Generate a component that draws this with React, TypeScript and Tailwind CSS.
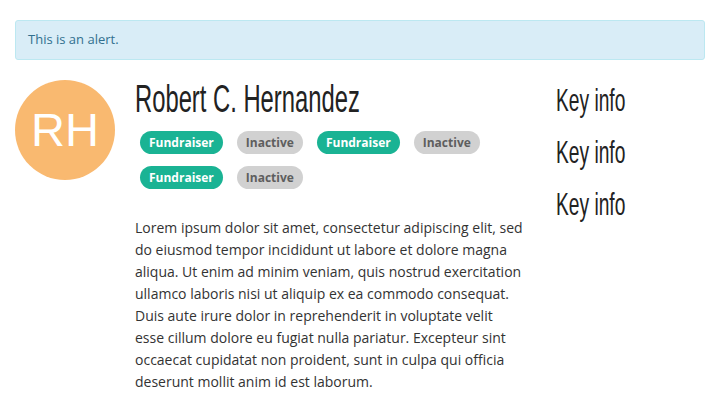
const tags = [
  { label: "Fundraiser", active: true },
  { label: "Inactive", active: false },
  { label: "Fundraiser", active: true },
  { label: "Inactive", active: false },
  { label: "Fundraiser", active: true },
  { label: "Inactive", active: false },
];

export default function App() {
  return (
    <div className="w-[720px] h-[415px] bg-white px-[15px] pt-[20px] font-['Open_Sans',sans-serif] text-[#333]">
      {/* Alert */}
      <div className="h-[40px] flex items-center px-[12px] rounded-[3px] border border-[#bce8f1] bg-[#d9edf7] text-[#31708f] text-[13px]">
        This is an alert.
      </div>

      <div className="flex mt-[20px]">
        {/* Avatar */}
        <div className="w-[100px] h-[100px] shrink-0 rounded-full bg-[#f9b970] flex items-center justify-center">
          <span className="text-white text-[47px] leading-none font-['Liberation_Sans',Arial,sans-serif] -mt-[2px]">RH</span>
        </div>

        {/* Main */}
        <div className="ml-[20px] w-[400px]">
          <h1 className="h-[37px] text-[39px] leading-[37px] text-[#222] font-['Liberation_Sans',Arial,sans-serif] whitespace-nowrap">
            <span className="inline-block origin-left scale-x-[0.61]">Robert C. Hernandez</span>
          </h1>
          <div className="mt-[14px] ml-[5px] flex flex-wrap gap-x-[14px] gap-y-[12px] w-[360px]">
            {tags.map((t, i) => (
              <span
                key={i}
                className={`h-[23px] px-[9px] rounded-full flex items-center text-[12px] font-bold ${
                  t.active ? "bg-[#1ab394] text-white" : "bg-[#d1d1d1] text-[#5e5e5e]"
                }`}
              >
                {t.label}
              </span>
            ))}
          </div>
          <p className="mt-[28px] text-[14px] leading-[22px] text-[#333] w-[389px]">
            Lorem ipsum dolor sit amet, consectetur adipiscing elit, sed do eiusmod tempor incididunt ut
            labore et dolore magna aliqua. Ut enim ad minim veniam, quis nostrud exercitation ullamco
            laboris nisi ut aliquip ex ea commodo consequat. Duis aute irure dolor in reprehenderit in
            voluptate velit esse cillum dolore eu fugiat nulla pariatur. Excepteur sint occaecat
            cupidatat non proident, sunt in culpa qui officia deserunt mollit anim id est laborum.
          </p>
        </div>

        {/* Key info */}
        <div className="ml-[21px] pt-[3px] flex flex-col gap-[18px]">
          {["Key info", "Key info", "Key info"].map((k, i) => (
            <div
              key={i}
              className="h-[34px] text-[32px] leading-[34px] text-[#222] font-['Liberation_Sans',Arial,sans-serif] whitespace-nowrap"
            >
              <span className="inline-block origin-left scale-x-[0.6]">{k}</span>
            </div>
          ))}
        </div>
      </div>
    </div>
  );
}
